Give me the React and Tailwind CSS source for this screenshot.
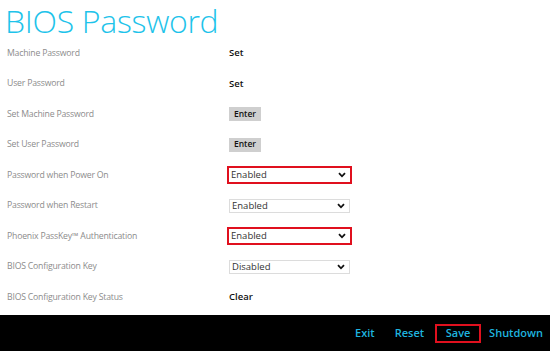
import { useState } from 'react';

const rows = [
  { label: 'Machine Password', kind: 'text', value: 'Set' },
  { label: 'User Password', kind: 'text', value: 'Set' },
  { label: 'Set Machine Password', kind: 'button' },
  { label: 'Set User Password', kind: 'button' },
  { label: 'Password when Power On', kind: 'select', value: 'Enabled', marked: true },
  { label: 'Password when Restart', kind: 'select', value: 'Enabled' },
  { label: 'Phoenix PassKey\u2122 Authentication', kind: 'select', value: 'Enabled', marked: true },
  { label: 'BIOS Configuration Key', kind: 'select', value: 'Disabled' },
  { label: 'BIOS Configuration Key Status', kind: 'text', value: 'Clear' },
];

function Chevron() {
  return (
    <svg width="8" height="6" viewBox="0 0 8 6" className="shrink-0">
      <path d="M1 1.2 L4 4.3 L7 1.2" fill="none" stroke="#111" strokeWidth="1.8" />
    </svg>
  );
}

function Dropdown({ value, marked }) {
  const box = (
    <div className="flex items-center justify-between w-[121px] h-[14px] bg-white border border-[#dcdcdc] pl-[2px] pr-[4px] text-[9.5px] text-[#333]">
      <span>{value}</span>
      <Chevron />
    </div>
  );
  if (!marked) return <div className="ml-[1px]">{box}</div>;
  return <div className="-ml-[1px] w-fit border-2 border-[#e0101e] [&>div]:border-0 [&>div]:h-[14px]">{box}</div>;
}

export default function App() {
  const [active] = useState('Save');

  return (
    <div className="w-[550px] h-[351px] flex flex-col bg-white overflow-hidden" style={{ fontFamily: '"Open Sans", "Noto Sans", sans-serif' }}>
      <div className="flex-1 pt-[1px]">
        <h1 className="h-[37px] pl-[5px] text-[32px] leading-[40px] font-light text-[#1ec3ea] tracking-[-0.3px]">
          BIOS Password
        </h1>
        <div>
          {rows.map((r) => (
            <div key={r.label} className="grid grid-cols-[228px_1fr] items-center h-[30.5px]">
              <span className="pl-[7px] text-[8.7px] tracking-[-0.2px] text-[#8c8c8c]">{r.label}</span>
              {r.kind === 'text' && (
                <span className="pl-[1px] text-[9.5px] font-semibold text-[#111]">{r.value}</span>
              )}
              {r.kind === 'button' && (
                <span className="ml-[1px] w-[32px] h-[14px] flex items-center justify-center bg-[#cfcfcf] text-[8.5px] font-semibold text-[#111]">
                  Enter
                </span>
              )}
              {r.kind === 'select' && <Dropdown value={r.value} marked={r.marked} />}
            </div>
          ))}
        </div>
      </div>
      <div className="h-[36px] bg-black flex items-center justify-end pr-[7px] text-[11px] font-semibold text-[#1fb3df]">
        <span className="mr-[20px]">Exit</span>
        <span className="mr-[11px]">Reset</span>
        <span
          className={
            active === 'Save'
              ? 'w-[46px] h-[19px] flex items-center justify-center border-2 border-[#e0101e] mr-[8px]'
              : 'mr-[8px]'
          }
        >
          Save
        </span>
        <span>Shutdown</span>
      </div>
    </div>
  );
}
